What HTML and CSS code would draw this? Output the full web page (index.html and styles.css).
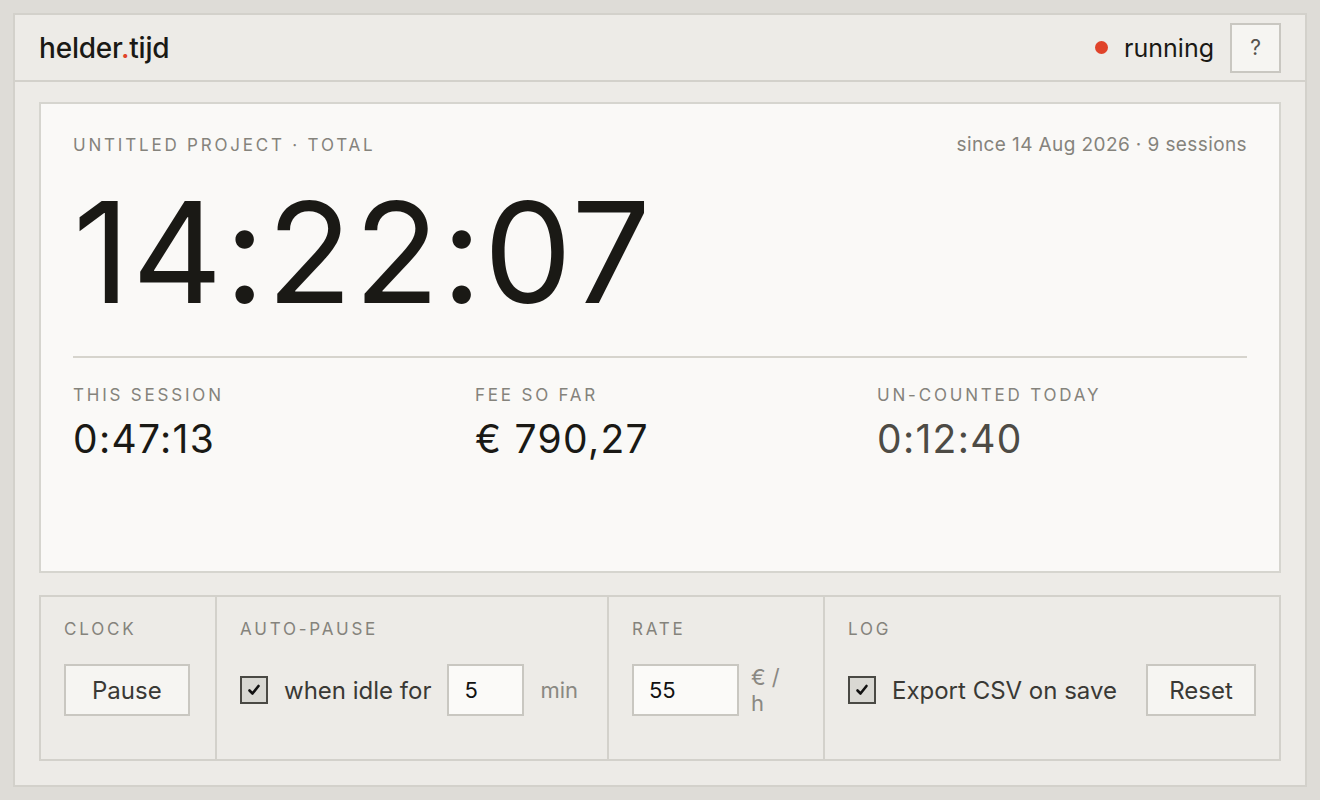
FILE: index.html
```html
<!DOCTYPE html>
<html lang="en">
  <head>
    <meta charset="UTF-8" />
    <title>helder.tijd</title>
    <link rel="stylesheet" href="styles.css">
  </head>
  <body>
    <div class="app">
      <header class="topbar">
        <div class="logo">helder<span class="logo-dot">.</span>tijd</div>
        <div class="status">
          <span class="status-dot"></span>
          <span class="status-text">running</span>
          <button class="btn btn-help">?</button>
        </div>
      </header>

      <main class="content">
        <section class="total-card">
          <div class="total-head">
            <span class="eyebrow">Untitled project · total</span>
            <span class="meta">since 14 Aug 2026 · 9 sessions</span>
          </div>
          <div class="big-clock">14:22:07</div>
          <div class="stats">
            <div class="stat">
              <div class="eyebrow">This session</div>
              <div class="stat-value">0:47:13</div>
            </div>
            <div class="stat">
              <div class="eyebrow">Fee so far</div>
              <div class="stat-value">€ 790,27</div>
            </div>
            <div class="stat">
              <div class="eyebrow">Un-counted today</div>
              <div class="stat-value muted">0:12:40</div>
            </div>
          </div>
        </section>

        <!-- settings strip -->
        <section class="controls">
          <div class="ctl">
            <div class="eyebrow">Clock</div>
            <div class="ctl-row">
              <button class="btn">Pause</button>
            </div>
          </div>

          <div class="ctl">
            <div class="eyebrow">Auto-pause</div>
            <div class="ctl-row">
              <span class="check">
                <svg width="16" height="16" viewBox="0 0 16 16"><polyline points="3.5,8.5 6.5,11.5 12.5,4" fill="none" stroke="#111" stroke-width="2.6" stroke-linecap="round" stroke-linejoin="round"/></svg>
              </span>
              <span class="ctl-text">when idle for</span>
              <input class="field field-idle" type="text" value="5">
              <span class="unit">min</span>
            </div>
          </div>

          <div class="ctl">
            <div class="eyebrow">Rate</div>
            <div class="ctl-row">
              <input class="field field-rate" type="text" value="55">
              <span class="unit unit-rate">€ / h</span>
            </div>
          </div>

          <div class="ctl">
            <div class="eyebrow">Log</div>
            <div class="ctl-row">
              <span class="check">
                <svg width="16" height="16" viewBox="0 0 16 16"><polyline points="3.5,8.5 6.5,11.5 12.5,4" fill="none" stroke="#111" stroke-width="2.6" stroke-linecap="round" stroke-linejoin="round"/></svg>
              </span>
              <span class="ctl-text">Export CSV on save</span>
              <button class="btn btn-reset">Reset</button>
            </div>
          </div>
        </section>
      </main>
    </div>
  </body>
</html>
```

FILE: styles.css
```css
* {
  box-sizing: border-box;
}

body {
  margin: 0;
  padding: 13px;
  background: #dedcd7;
  font-family: Inter, "Noto Sans", sans-serif;
  color: #1a1915;
}

.app {
  height: 774px;
  display: flex;
  flex-direction: column;
  background: #edebe7;
  border: 2px solid #d3d1cb;
}

.topbar {
  height: 67px;
  display: flex;
  align-items: center;
  justify-content: space-between;
  padding: 0 24px;
  border-bottom: 2px solid #d3d1cb;
}

.logo {
  font-size: 28px;
  font-weight: 500;
  letter-spacing: -0.2px;
  color: #1a1915;
}

.logo-dot {
  color: #e0432a;
}

.status {
  display: flex;
  align-items: center;
}

.status-dot {
  width: 13px;
  height: 13px;
  border-radius: 50%;
  background: #e0432a;
  margin-right: 16px;
}

.status-text {
  font-size: 25px;
  color: #1a1915;
  margin-right: 16px;
}

.btn {
  font-family: inherit;
  font-size: 24px;
  color: #3a3935;
  background: #f6f5f2;
  border: 2px solid #c9c7c1;
  border-radius: 0;
  padding: 0 26px;
  height: 52px;
  cursor: pointer;
}

.btn-help {
  width: 51px;
  height: 50px;
  padding: 0;
  font-size: 21px;
  color: #55534e;
}

.content {
  flex: 1;
  display: flex;
  flex-direction: column;
  gap: 22px;
  padding: 20px 24px 24px;
}

.total-card {
  flex: 1;
  background: #faf9f7;
  border: 2px solid #d6d5cf;
  padding: 30px 32px;
}

.total-head {
  display: flex;
  justify-content: space-between;
  align-items: baseline;
  line-height: 21px;
}

.eyebrow {
  font-size: 17px;
  line-height: 21px;
  text-transform: uppercase;
  letter-spacing: 2.8px;
  color: #85837c;
}

.meta {
  font-size: 19px;
  letter-spacing: 0.4px;
  color: #85837c;
}

.big-clock {
  margin-top: 26px;
  font-size: 140px;
  line-height: 140px;
  letter-spacing: 2px;
  color: #1a1915;
}

.stats {
  margin-top: 34px;
  border-top: 2px solid #d6d4cd;
  padding-top: 27px;
  display: grid;
  grid-template-columns: repeat(3, 1fr);
  gap: 32px;
}

.stat-value {
  margin-top: 10px;
  font-size: 39px;
  line-height: 46px;
  letter-spacing: 1.3px;
  color: #1a1915;
}

.stat-value.muted {
  color: #4d4b45;
}

.controls {
  height: 166px;
  display: grid;
  grid-template-columns: 174px 392px 216px 1fr;
  border: 2px solid #d3d1cb;
}

.ctl {
  padding: 22px 23px;
}

.ctl + .ctl {
  border-left: 2px solid #d3d1cb;
}

.ctl-row {
  display: flex;
  align-items: center;
  gap: 16px;
  margin-top: 24px;
}

.check {
  width: 28px;
  height: 28px;
  flex: none;
  display: flex;
  align-items: center;
  justify-content: center;
  background: #d9d8d3;
  border: 2px solid #4a4944;
}

.ctl-text {
  font-size: 24px;
  color: #3a3935;
}

.field {
  font-family: inherit;
  font-size: 22px;
  color: #111;
  background: #fbfaf8;
  border: 2px solid #c9c7c1;
  border-radius: 0;
  height: 52px;
  padding: 0 15px;
  outline: none;
}

.field-idle {
  width: 77px;
}

.field-rate {
  width: 107px;
}

.unit {
  font-size: 22px;
  color: #8a8882;
}

.unit-rate {
  max-width: 36px;
  line-height: 26px;
  margin-left: -4px;
}

.btn-reset {
  margin-left: auto;
  padding: 0 20px;
  width: 110px;
}
```
